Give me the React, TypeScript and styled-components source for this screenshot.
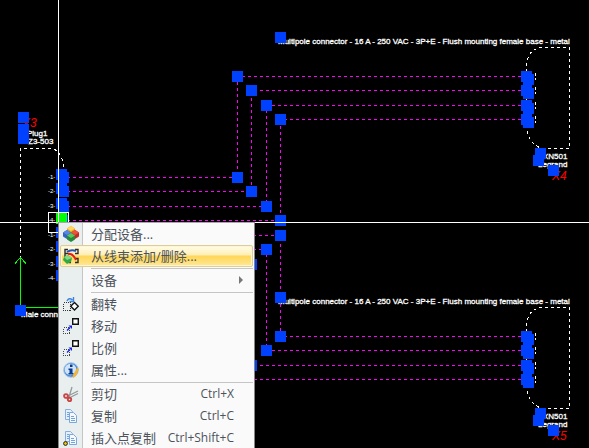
import React from "react";
import styled, { createGlobalStyle, css } from "styled-components";

const PageStyle = createGlobalStyle`
  * { box-sizing: border-box; }
  html, body, #root { height: 100%; }
  body { margin: 0; background: #000; overflow: hidden; }
`;

const Workspace = styled.main`
  position: relative;
  width: 100%;
  height: 100vh;
  overflow: hidden;
  background: #000;
`;

const Canvas = styled.svg`
  display: block;
  width: 100%;
  height: 100%;
  shape-rendering: crispEdges;
`;

const Label = styled.text`
  font: 8px "Liberation Sans", Arial, sans-serif;
  fill: #fff;
  stroke: #fff;
  stroke-width: 0.3px;
`;

const PinLabel = styled.text`
  font: 6px "Liberation Sans", Arial, sans-serif;
  fill: #fff;
`;

const Reference = styled.text`
  font: italic 12px "Liberation Sans", Arial, sans-serif;
  fill: #f00;
`;

const Menu = styled.div`
  position: absolute;
  left: 58px;
  top: 222px;
  min-width: 197px;
  padding: 0 1px;
  border: 1px solid #868686;
  border-top-color: #a8a8a8;
  background: linear-gradient(to right, #e9eeee 0 23px, #c5c5c5 23px 24px, #fafafa 24px);
`;

const Item = styled.button<{ $active?: boolean }>`
  display: grid;
  grid-template-columns: 22px 1fr auto;
  column-gap: 8px;
  align-items: center;
  width: 100%;
  height: 22px;
  padding: 0 18px 0 0;
  border: 1px solid transparent;
  border-radius: 2px;
  background: none;
  color: #4c535c;
  font: 13px/20px "Open Sans", "Noto Sans CJK SC", sans-serif;
  text-align: left;
  white-space: nowrap;
  ${(p) =>
    p.$active &&
    css`
      border-color: #dbce99;
      background: linear-gradient(#fffdeb, #ffeeb5 45%, #ffd656 50%, #ffe794);
      box-shadow: inset 0 0 0 1px #fff6cf;
    `}
`;

const Shortcut = styled.kbd`
  font: 12px/20px "Open Sans", "Noto Sans", sans-serif;
`;

const Separator = styled.hr`
  height: 1px;
  margin: 1px 0 0 31px;
  border: 0;
  background: #c5c5c5;
`;

const Icon = styled.svg`
  display: block;
  width: 16px;
  height: 16px;
  margin-left: 2px;
`;

const Arrow = styled.svg`
  display: block;
  width: 4px;
  height: 8px;
  margin-right: -9px;
  justify-self: end;
  position: static;
`;

const BLUE = "#0040ff";
const MAGENTA = "#ff00ff";

const Grip = ({ x, y, color = BLUE }: { x: number; y: number; color?: string }) => (
  <rect x={x - 5} y={y - 5} width="11" height="11" fill={color} />
);

const Wire = ({ points }: { points: string }) => (
  <polyline
    points={points}
    transform="translate(0.5 0.5)"
    fill="none"
    stroke={MAGENTA}
    strokeDasharray="3 3"
  />
);

const offsets = [0, 14, 29, 43];
const connectorText =
  "Multipole connector - 16 A - 250 VAC - 3P+E - Flush mounting female base - metal";

function Socket({ dy, name, code }: { dy: number; name: string; code: string }) {
  return (
    <g transform={`translate(0 ${dy})`}>
      <path
        d="M526.5 126V65Q528 48 543 47.5H569.5V148.5H543Q528 145 526.5 126"
        fill="none"
        stroke="#fff"
        strokeDasharray="3 3"
      />
      <Label x="278" y="44">{connectorText}</Label>
      <Grip x={280} y={37} />
      {offsets.map((o) => (
        <g key={o}>
          <path d={`M535.5 ${73 + o}v3m0 2v2`} stroke="#fff" />
          <Grip x={526} y={76 + o} />
          <Grip x={528} y={79 + o} />
        </g>
      ))}
      <Label x="543" y="159">{code}</Label>
      <Label x="538" y="167">Legrand</Label>
      <Reference x="552" y="180">{name}</Reference>
      <Grip x={540} y={153} />
      <Grip x={538} y={160} />
      <Grip x={553} y={170} />
    </g>
  );
}

function Plug() {
  return (
    <g>
      <path
        d="M20.5 307V148.5H50Q62 149 63.5 168V300"
        fill="none"
        stroke="#fff"
        strokeDasharray="3 3"
      />
      <Reference x="22" y="127">X3</Reference>
      <Label x="27" y="136">Plug1</Label>
      <Label x="28" y="144">Z3-503</Label>
      <Grip x={23} y={117} />
      <Grip x={23} y={129} />
      <Grip x={23} y={138} />
      {[177, 191, 206, 220, 235, 249, 264, 278].map((y, i) => (
        <g key={y}>
          <PinLabel x="48" y={y + 2}>{`-${(i % 4) + 1}-`}</PinLabel>
          <Grip x={61} y={y - 3} />
          <Grip x={63} y={y} />
        </g>
      ))}
      <path d="M20.5 307V258M15 263.5l5.5-6l5.5 6M26 307.5H60" fill="none" stroke="#0f0" />
      <Label x="21" y="317">Male connector</Label>
      <Grip x={20} y={310} />
    </g>
  );
}

function Drawing() {
  return (
    <Canvas role="img" aria-label="Harness drawing">
      <Wire points="526,76 237,76 237,177 63,177" />
      <Wire points="526,90 251,90 251,191 63,191" />
      <Wire points="526,105 266,105 266,206 63,206" />
      <Wire points="526,119 280,119 280,220 63,220" />
      <Wire points="526,336 280,336 280,235 63,235" />
      <Wire points="526,350 266,350 266,249 63,249" />
      <Wire points="526,365 251,365 251,264 63,264" />
      <Wire points="526,379 237,379 237,278 63,278" />
      {[237, 251, 266, 280].map((x, i) => (
        <g key={x}>
          <Grip x={x} y={76 + offsets[i]} />
          <Grip x={x} y={177 + offsets[i]} />
          <Grip x={x} y={278 - offsets[i]} />
          <Grip x={x} y={379 - offsets[i]} />
        </g>
      ))}
      <Socket dy={0} name="X4" code="XN501" />
      <Socket dy={260} name="X5" code="XN501" />
      <Plug />
      <Grip x={61} y={218} color="#0f0" />
      <rect x="48.5" y="212.5" width="20" height="20" fill="none" stroke="#fff" />
      <path d="M58.5 0V222M0 222.5H4000" stroke="#fff" />
    </Canvas>
  );
}

const pages = (
  <>
    <path d="M2.5 1.5h5l2 2v8h-7z" fill="#e4f0fd" stroke="#8aaedb" />
    <path d="M6.500 4.500h4l3 3v7h-7z" fill="#f4f9ff" stroke="#7fa6d8" />
    <path d="M4 4.500h2M4 6.500h2M4 8.500h2M8 8.500h3M8 10.500h4M8 12.500h4" stroke="#73a3dc" />
  </>
);

const icons: Record<string, React.ReactNode> = {
  assign: (
    <>
      <path d="M8 0l4 2.5v4L8 9 4 6.5v-4z" fill="#e9a91c" />
      <path d="M8 0l4 2.5L8 5 4 2.5z" fill="#ffd75a" />
      <path d="M4 4l4 2.5v4L4 13 0 10.5v-4z" fill="#3163c6" />
      <path d="M4 4l4 2.5L4 9 0 6.5z" fill="#5585e6" />
      <path d="M12 4l4 2.5v4L12 13 8 10.5v-4z" fill="#c82a22" />
      <path d="M12 4l4 2.5L12 9 8 6.5z" fill="#ee513c" />
      <path d="M8 7l4 2.5v4L8 16l-4-2.5v-4z" fill="#25883a" />
      <path d="M8 7l4 2.5L8 12 4 9.500z" fill="#5cc85c" />
    </>
  ),
  harness: (
    <>
      <path d="M5 1.5H2v4h3M2 5v5M12 1.500h3v4h-3M12 10.500h3v4h-3M6 14.500h2" fill="none" stroke="#2d2d2d" strokeWidth="1.400" />
      <path d="M4 4q4-3 9-1" fill="none" stroke="#2456b8" strokeWidth="2" />
      <path d="M5 6q5-1 8 6" fill="none" stroke="#e3211c" strokeWidth="2" />
      <path d="M5 7l4 3-1 4-4 2-4-4 1-3z" fill="#33a847" />
      <path d="M5 7l4 3-5 2-3-3z" fill="#83dc82" />
    </>
  ),
  flip: (
    <>
      <path d="M0.500 6.500h7v8h-7z" fill="none" stroke="#333" strokeDasharray="1 1" shapeRendering="crispEdges" />
      <path d="M11.500 6.500l3.800 3.800-3.800 3.800-3.800-3.800z" fill="#fff" stroke="#111" strokeWidth="1.400" />
      <path d="M4 5q2-4 5.500-1M10.500 1v4.500H6.500" fill="none" stroke="#3e83dc" strokeWidth="1.400" />
    </>
  ),
  move: (
    <>
      <path d="M0.500 9.500h6v6h-6z" fill="none" stroke="#444" strokeDasharray="1 1" shapeRendering="crispEdges" />
      <path d="M9.700 0.700h5.600v5.600H9.700z" fill="#fff" stroke="#111" strokeWidth="1.400" />
      <path d="M4 12.500l3-3" stroke="#1721e0" strokeWidth="1.200" />
      <path d="M5.500 7.500H9V11z" fill="#1721e0" />
    </>
  ),
  info: (
    <>
      <circle cx="8" cy="8" r="7.300" fill="#4c8bd8" stroke="#a8c5e6" />
      <circle cx="7.500" cy="7.500" r="5.800" fill="#cfe4fa" />
      <path d="M7 2.500h2.500V5H7zM5.500 6.500h4V11h1v1.500h-5V11h1V8h-1z" fill="#0b3b8c" />
      <path d="M14 6l2 1-3 7-3 2v-3z" fill="#f4b532" />
    </>
  ),
  cut: (
    <>
      <path d="M5 10l10-5M7 11.500l8-4M6 11l3-10" fill="none" stroke="#949b9e" strokeWidth="1.300" />
      <circle cx="3" cy="10" r="1.900" fill="none" stroke="#c94747" strokeWidth="1.900" />
      <circle cx="6.500" cy="13.500" r="1.700" fill="none" stroke="#c94747" strokeWidth="1.900" />
    </>
  ),
  copy: pages,
  copyPoint: (
    <>
      {pages}
      <circle cx="2.500" cy="13.500" r="1.900" fill="#f2c800" stroke="#222" />
    </>
  ),
};

type Entry = { label: string; icon?: string; keys?: string; submenu?: boolean; active?: boolean };

const groups: Entry[][] = [
  [
    { label: "分配设备...", icon: "assign" },
    { label: "从线束添加/删除...", icon: "harness", active: true },
  ],
  [{ label: "设备", submenu: true }],
  [
    { label: "翻转", icon: "flip" },
    { label: "移动", icon: "move" },
    { label: "比例", icon: "move" },
    { label: "属性...", icon: "info" },
  ],
  [
    { label: "剪切", icon: "cut", keys: "Ctrl+X" },
    { label: "复制", icon: "copy", keys: "Ctrl+C" },
    { label: "插入点复制", icon: "copyPoint", keys: "Ctrl+Shift+C" },
  ],
];

export default function App() {
  return (
    <Workspace>
      <PageStyle />
      <Drawing />
      <Menu role="menu">
        {groups.map((group, g) => (
          <React.Fragment key={g}>
            {g > 0 && <Separator />}
            {group.map((entry) => (
              <Item
                key={entry.label}
                type="button"
                role="menuitem"
                aria-haspopup={entry.submenu ? "menu" : undefined}
                $active={entry.active}
              >
                <Icon viewBox="0 0 16 16" aria-hidden="true">
                  {entry.icon && icons[entry.icon]}
                </Icon>
                <span>{entry.label}</span>
                {entry.keys && <Shortcut>{entry.keys}</Shortcut>}
                {entry.submenu && (
                  <Arrow viewBox="0 0 4 8" aria-hidden="true">
                    <path d="M0 0l4 4-4 4z" fill="#777" />
                  </Arrow>
                )}
              </Item>
            ))}
          </React.Fragment>
        ))}
      </Menu>
    </Workspace>
  );
}
